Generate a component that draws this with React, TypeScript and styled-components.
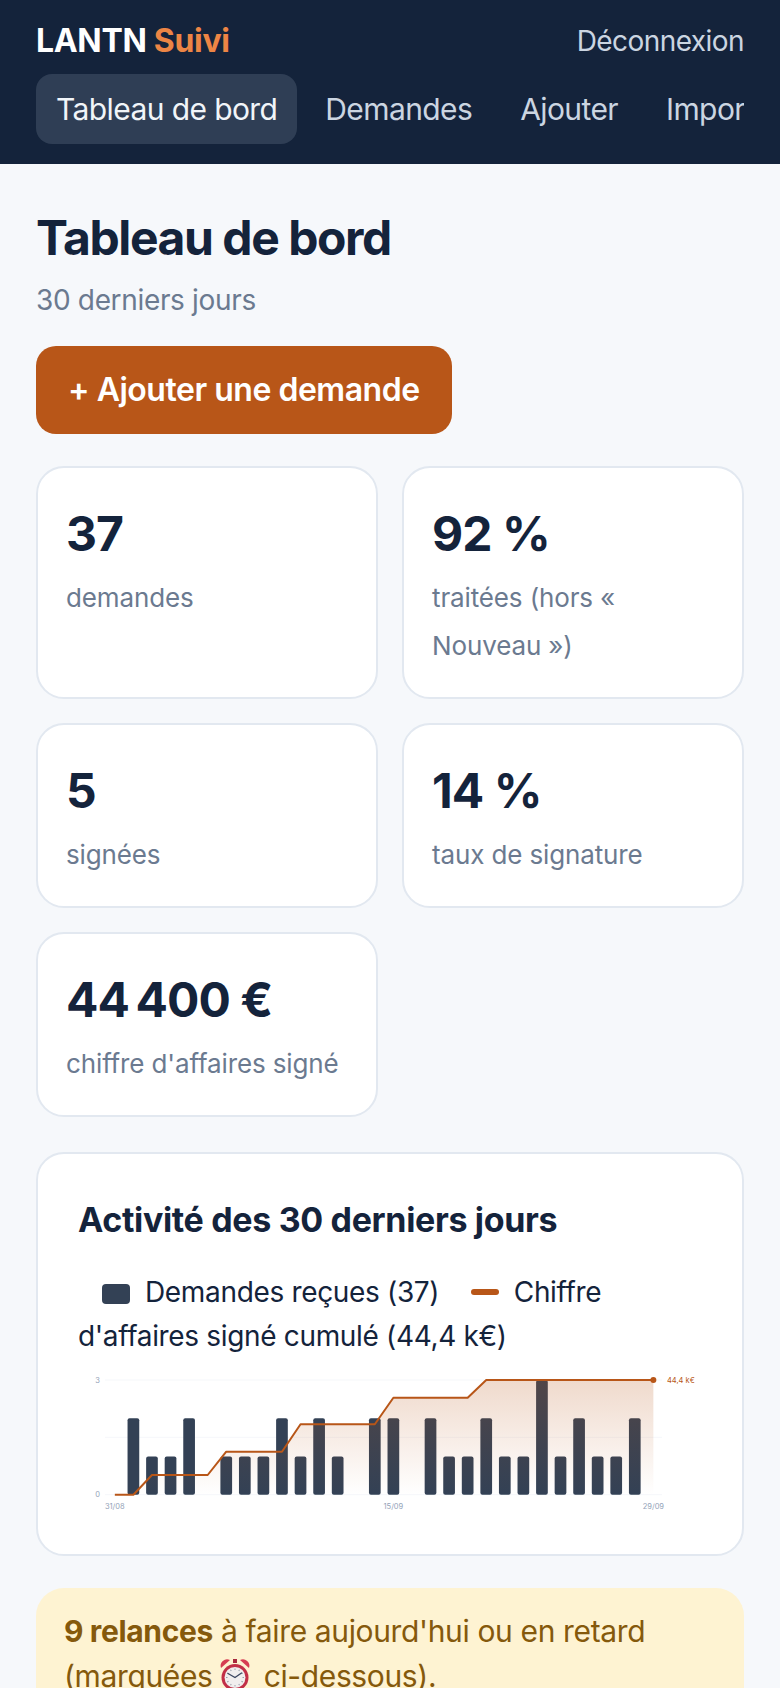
import React from "react";
import styled, { createGlobalStyle } from "styled-components";

const GlobalStyle = createGlobalStyle`
  * { box-sizing: border-box; }
  html, body { margin: 0; padding: 0; background: #f6f8fb; }
  body { font-family: Inter, "Noto Sans", sans-serif; color: #14233b; line-height: 1.6; }
`;

const Page = styled.div`
  height: 100vh;
  overflow: hidden;
  background: #f6f8fb;
`;

const Header = styled.header`
  background: #14233b;
  height: 164px;
  padding: 16px 36px 0;
`;

const TopRow = styled.div`
  display: flex;
  justify-content: space-between;
  align-items: center;
  height: 50px;
  margin-bottom: 8px;
`;

const Logo = styled.div`
  font-size: 32px;
  font-weight: 700;
  letter-spacing: -0.01em;
  color: #fff;
  span { color: #ed8545; }
`;

const Logout = styled.div`
  font-size: 28px;
  letter-spacing: -0.02em;
  color: #cbd5e1;
`;

const Tabs = styled.nav`
  display: flex;
  gap: 8px;
  overflow: hidden;
`;

const Tab = styled.div<{ $active?: boolean }>`
  flex: none;
  height: 70px;
  line-height: 70px;
  padding: 0 20px;
  border-radius: 16px;
  font-size: 30px;
  letter-spacing: -0.02em;
  white-space: nowrap;
  color: ${(p) => (p.$active ? "#f1f5f9" : "#cbd5e1")};
  background: ${(p) => (p.$active ? "#2f3e55" : "transparent")};
`;

const Main = styled.main`
  padding: 37px 36px 0;
`;

const Title = styled.h1`
  margin: 0 0 3px;
  font-size: 48px;
  font-weight: 700;
  letter-spacing: -0.03em;
  line-height: 74px;
`;

const Subtitle = styled.p`
  margin: 0 0 24px;
  font-size: 28px;
  letter-spacing: -0.012em;
  line-height: 44px;
  color: #6b7a90;
`;

const AddButton = styled.div`
  display: inline-block;
  height: 88px;
  line-height: 88px;
  padding: 0 32px;
  border-radius: 20px;
  background: #b85618;
  color: #fff;
  font-size: 32px;
  font-weight: 600;
  letter-spacing: -0.015em;
`;

const StatsGrid = styled.div`
  display: grid;
  grid-template-columns: 1fr 1fr;
  gap: 24px;
  margin-top: 32px;
`;

const Card = styled.div`
  background: #fff;
  border: 2px solid #e2e8f0;
  border-radius: 28px;
`;

const StatCard = styled(Card)`
  padding: 28px 28px 27px;
`;

const StatValue = styled.div`
  font-size: 48px;
  font-weight: 700;
  letter-spacing: -0.02em;
  line-height: 76px;
  margin-bottom: 2px;
  white-space: nowrap;
`;

const StatLabel = styled.div`
  font-size: 26px;
  letter-spacing: -0.005em;
  line-height: 48px;
  color: #6b7a90;
`;

const ChartCard = styled(Card)`
  margin-top: 35px;
  padding: 39px 40px 38px;
`;

const ChartTitle = styled.h2`
  margin: 0 0 23px;
  font-size: 34px;
  font-weight: 700;
  letter-spacing: -0.01em;
  line-height: 54px;
`;

const Legend = styled.div`
  font-size: 28px;
  letter-spacing: -0.012em;
  line-height: 44px;
`;

const LegendSwatch = styled.i<{ $line?: boolean }>`
  display: inline-block;
  width: 28px;
  height: ${(p) => (p.$line ? "6px" : "20px")};
  border-radius: ${(p) => (p.$line ? "3px" : "4px")};
  background: ${(p) => (p.$line ? "#b85618" : "#334155")};
  margin: 0 15px 0 24px;
  vertical-align: ${(p) => (p.$line ? "7px" : "-2px")};
`;

const ChartSvg = styled.svg`
  display: block;
  width: 624px;
  height: 146px;
  margin-top: 12px;
`;

const Alert = styled.div`
  margin-top: 32px;
  padding: 21px 28px 40px;
  background: #fef3d2;
  border-radius: 28px;
  color: #85590c;
  font-size: 30px;
  letter-spacing: -0.012em;
  line-height: 45px;
  strong { font-weight: 700; }
`;

const ClockIcon = styled.svg`
  display: inline-block;
  width: 32px;
  height: 36px;
  margin: 0 13px 0 -2px;
  vertical-align: -6px;
`;

const STATS = [
  { value: "37", label: "demandes" },
  { value: "92 %", label: "traitées (hors « Nouveau »)" },
  { value: "5", label: "signées" },
  { value: "14 %", label: "taux de signature" },
  { value: "44\u2009400 €", label: "chiffre d'affaires signé" },
];

const BARS = [0, 2, 1, 1, 2, 0, 1, 1, 1, 2, 1, 2, 1, 0, 2, 2, 0, 2, 1, 1, 2, 1, 1, 3, 1, 2, 1, 1, 2, 0];

const LINE: [number, number][] = [
  [0, 124.7], [1, 124.7], [2, 105], [5, 105], [6, 81.7], [9, 81.7], [10, 54.3],
  [14, 54.3], [15, 27.7], [19, 27.7], [20, 10], [29, 10],
];

const xAt = (i: number) => 36.83 + 18.57 * i;
const BASE = 124.7;
const UNIT = (BASE - 10) / 3;
const TICKS = [0, 30, 60, 90, 120, 150, 180, 210, 240, 270, 300, 330];

const ActivityChart = () => {
  const points = LINE.map(([i, y]) => `${xAt(i)},${y}`).join(" ");
  return (
    <ChartSvg viewBox="0 0 624 146">
      <defs>
        <linearGradient id="area" x1="0" y1="0" x2="0" y2="1">
          <stop offset="0" stopColor="#b85618" stopOpacity="0.22" />
          <stop offset="1" stopColor="#b85618" stopOpacity="0" />
        </linearGradient>
      </defs>
      {[10, 67.3, BASE].map((y) => (
        <line key={y} x1="27" x2="584" y1={y} y2={y} stroke="#f5f7fa" />
      ))}
      <text x="22" y="12.5" fontSize="7.5" fill="#94a3b8" textAnchor="end">3</text>
      <text x="22" y="127.2" fontSize="7.5" fill="#94a3b8" textAnchor="end">0</text>
      {BARS.map((v, i) =>
        v > 0 ? (
          <rect key={i} x={xAt(i) - 5.85} y={BASE - v * UNIT} width="11.7" height={v * UNIT} rx="2" fill="#334155" />
        ) : null
      )}
      <polygon points={`${points} ${xAt(29)},${BASE} ${xAt(0)},${BASE}`} fill="url(#area)" />
      <polyline points={points} fill="none" stroke="#b85618" strokeWidth="2" strokeLinejoin="round" />
      <circle cx={xAt(29)} cy="10" r="3" fill="#b85618" />
      <text x="589" y="12.5" fontSize="7.5" fill="#b85618">44,4 k€</text>
      <text x={xAt(0)} y="138.5" fontSize="7.5" fill="#94a3b8" textAnchor="middle">31/08</text>
      <text x={xAt(15)} y="138.5" fontSize="7.5" fill="#94a3b8" textAnchor="middle">15/09</text>
      <text x={xAt(29)} y="138.5" fontSize="7.5" fill="#94a3b8" textAnchor="middle">29/09</text>
    </ChartSvg>
  );
};

const AlarmClock = () => (
  <ClockIcon viewBox="0 0 32 36">
    <rect x="14" y="2" width="4" height="4" fill="#a8283c" />
    <path d="M2 11 A6.5 6.5 0 0 1 11 3 Z" fill="#d63d52" />
    <path d="M30 11 A6.5 6.5 0 0 0 21 3 Z" fill="#d63d52" />
    <circle cx="16" cy="20.5" r="13.5" fill="#c22f47" />
    <circle cx="16" cy="20.5" r="10.5" fill="#f1eeee" />
    {TICKS.map((deg) => (
      <line key={deg} x1="16" y1="11.5" x2="16" y2="13" stroke="#9aa0ab" transform={`rotate(${deg} 16 20.5)`} />
    ))}
    <path d="M9 16.5 L16 20.5 L22.5 16" fill="none" stroke="#3b4660" strokeWidth="1.3" strokeLinecap="round" />
  </ClockIcon>
);

export default function App() {
  return (
    <Page>
      <GlobalStyle />
      <Header>
        <TopRow>
          <Logo>LANTN <span>Suivi</span></Logo>
          <Logout>Déconnexion</Logout>
        </TopRow>
        <Tabs>
          <Tab $active>Tableau de bord</Tab>
          <Tab>Demandes</Tab>
          <Tab>Ajouter</Tab>
          <Tab>Importer</Tab>
        </Tabs>
      </Header>
      <Main>
        <Title>Tableau de bord</Title>
        <Subtitle>30 derniers jours</Subtitle>
        <AddButton>+ Ajouter une demande</AddButton>
        <StatsGrid>
          {STATS.map((s) => (
            <StatCard key={s.label}>
              <StatValue>{s.value}</StatValue>
              <StatLabel>{s.label}</StatLabel>
            </StatCard>
          ))}
        </StatsGrid>
        <ChartCard>
          <ChartTitle>Activité des 30 derniers jours</ChartTitle>
          <Legend>
            <LegendSwatch />Demandes reçues (37){" "}
            <LegendSwatch $line />Chiffre d'affaires signé cumulé (44,4 k€)
          </Legend>
          <ActivityChart />
        </ChartCard>
        <Alert>
          <strong>9 relances</strong> à faire aujourd'hui ou en retard (marquées <AlarmClock />ci-dessous).
        </Alert>
      </Main>
    </Page>
  );
}
